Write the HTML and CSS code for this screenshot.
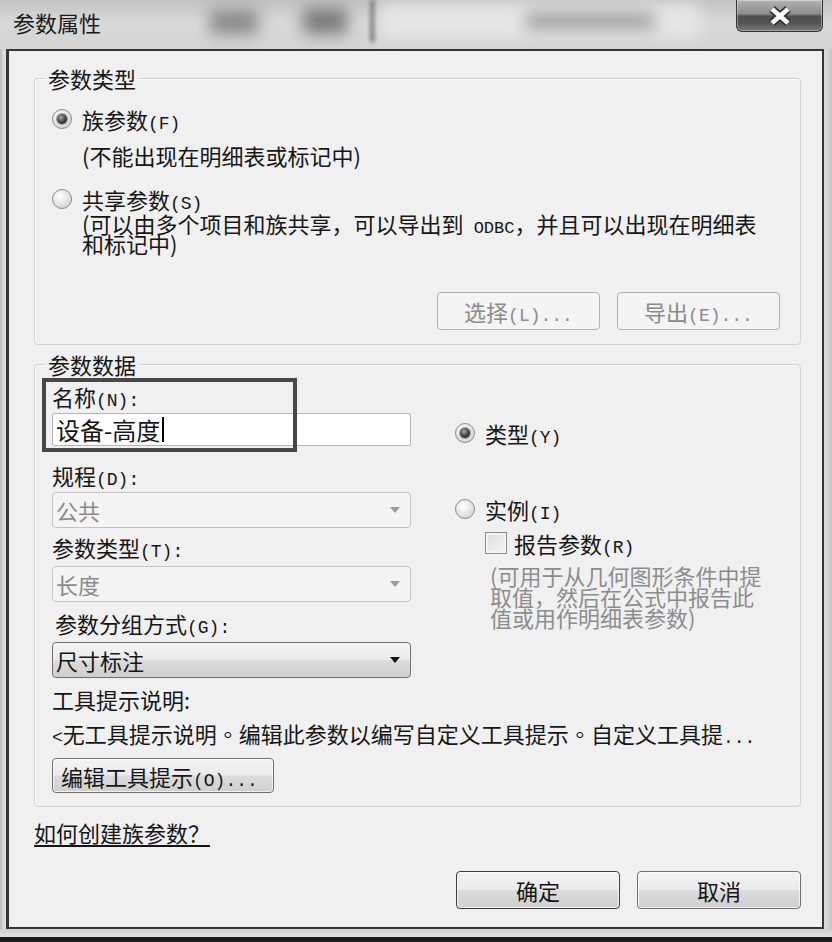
FILE: index.html
```html
<!DOCTYPE html>
<html lang="zh-CN">
<head>
  <meta charset="UTF-8" />
  <meta name="viewport" content="width=device-width, initial-scale=1.0"/>
  <title>参数属性</title>
  <link rel="stylesheet" href="styles.css">
</head>
<body>
  <div class="window">
    <div class="titlebar">
      <span class="glass glass-a"></span>
      <span class="glass glass-b"></span>
      <span class="glass glass-line"></span>
      <span class="glass glass-light"></span>
      <span class="glass glass-c"></span>
      <span class="title">参数属性</span>
      <button class="close-btn" title="关闭">
        <svg width="26" height="22" viewBox="0 0 26 22">
          <path d="M5 4 L21 18 M21 4 L5 18" stroke="#2e2e2e" stroke-width="8" fill="none"/>
          <path d="M5 4 L21 18 M21 4 L5 18" stroke="#ffffff" stroke-width="4.5" fill="none"/>
        </svg>
      </button>
    </div>

    <div class="client">
      <fieldset class="group group-type">
        <legend>参数类型</legend>
        <div class="radio-row first">
          <span class="radio on"></span>
          <span>族参数<span class="key">(F)</span></span>
        </div>
        <p class="note">(不能出现在明细表或标记中)</p>
        <div class="radio-row shared">
          <span class="radio"></span>
          <span>共享参数<span class="key">(S)</span></span>
        </div>
        <p class="note tight">(可以由多个项目和族共享，可以导出到<span class="key"> ODBC</span>，并且可以出现在明细表<br>和标记中)</p>
        <div class="group-actions">
          <button class="btn" disabled>选择<span class="key">(L)...</span></button>
          <button class="btn" disabled>导出<span class="key">(E)...</span></button>
        </div>
      </fieldset>

      <fieldset class="group group-data">
        <legend>参数数据</legend>
        <div class="data-cols">
          <div class="data-left">
            <div class="name-field">
              <label class="field-label">名称<span class="key">(N):</span></label>
              <div class="textbox">设备-高度<span class="caret"></span></div>
              <span class="callout"></span>
            </div>

            <label class="field-label discipline">规程<span class="key">(D):</span></label>
            <div class="combo disabled"><span>公共</span><span class="arrow"></span></div>

            <label class="field-label">参数类型<span class="key">(T):</span></label>
            <div class="combo disabled"><span>长度</span><span class="arrow"></span></div>

            <label class="field-label group-by">参数分组方式<span class="key">(G):</span></label>
            <div class="combo"><span>尺寸标注</span><span class="arrow"></span></div>
          </div>

          <div class="data-right">
            <div class="radio-row type-row">
              <span class="radio on"></span>
              <span>类型<span class="key">(Y)</span></span>
            </div>
            <div class="radio-row instance-row">
              <span class="radio"></span>
              <span>实例<span class="key">(I)</span></span>
            </div>
            <div class="check-row">
              <span class="checkbox"></span>
              <span>报告参数<span class="key">(R)</span></span>
            </div>
            <p class="report-note">(可用于从几何图形条件中提<br>取值，然后在公式中报告此<br>值或用作明细表参数)</p>
          </div>
        </div>

        <div class="tooltip-label">工具提示说明:</div>
        <div class="tooltip-text"><span class="key">&lt;</span>无工具提示说明<span class="cdot" lang="zh-Hant">。</span>编辑此参数以编写自定义工具提示<span class="cdot" lang="zh-Hant">。</span>自定义工具提<span class="key">...</span></div>
        <button class="btn edit-btn">编辑工具提示<span class="key">(O)...</span></button>
      </fieldset>

      <a class="help-link" href="#">如何创建族参数？</a>

      <div class="dialog-actions">
        <button class="btn default">确定</button>
        <button class="btn">取消</button>
      </div>
    </div>
    <div class="frame-bottom"></div>
  </div>
</body>
</html>
```

FILE: styles.css
```css
html, body {
  margin: 0;
  padding: 0;
}

body {
  font-family: "Noto Sans CJK SC", "Noto Sans", sans-serif;
  font-size: 22px;
  color: #151515;
  background: #d6d6d6;
}

.window {
  width: 832px;
  height: 942px;
  display: flex;
  flex-direction: column;
  background: linear-gradient(to right, #bdbdbd, #dcdcdc 4px, #d8d8d8 826px, #c4c4c4);
  overflow: hidden;
}

/* title bar with the blurred glass behind it */
.titlebar {
  position: relative;
  height: 49px;
  flex: none;
  display: flex;
  justify-content: space-between;
  align-items: flex-start;
  padding-left: 13px;
  background: linear-gradient(to bottom, #c2c2c2, #d9d9d9 45%, #d4d4d4);
  overflow: hidden;
}

.glass {
  position: absolute;
  filter: blur(8px);
}

.glass-a {
  left: 210px;
  top: 10px;
  width: 48px;
  height: 24px;
  background: #888;
}

.glass-b {
  left: 303px;
  top: 8px;
  width: 44px;
  height: 26px;
  background: #7a7a7a;
}

.glass-line {
  left: 370px;
  top: 0;
  width: 5px;
  height: 42px;
  background: #7a7a7a;
  filter: blur(2px);
}

.glass-light {
  left: 380px;
  top: 4px;
  width: 320px;
  height: 34px;
  background: #e6e6e6;
}

.glass-c {
  left: 525px;
  top: 12px;
  width: 130px;
  height: 18px;
  background: #a4a4a4;
}

.title {
  position: relative;
  margin-top: 10px;
  line-height: 24px;
  color: #1a1a1a;
}

.close-btn {
  position: relative;
  width: 87px;
  height: 32px;
  margin-right: 9px;
  padding: 0;
  border: 1px solid #333;
  border-top: none;
  border-radius: 0 0 6px 6px;
  background: linear-gradient(to bottom, #b4b4b4, #8c8c8c 45%, #4e4e4e 52%, #555 75%, #7a7a7a);
  box-shadow: inset 0 0 0 1px rgba(255, 255, 255, 0.35);
  display: flex;
  align-items: center;
  justify-content: center;
}

/* dialog client area */
.client {
  box-sizing: border-box;
  height: 880px;
  margin: 0 8px 0 6px;
  border: 2px solid #353535;
  border-left-width: 3px;
  background: #f0f0f0;
}

.frame-bottom {
  flex: none;
  height: 8px;
  background: linear-gradient(to bottom, #d0d0d0, #e2e2e2);
  border-bottom: 5px solid #1c1c1c;
}

.group {
  min-width: 0;
  margin: 0 21px 0 25px;
  padding: 0 20px 14px 17px;
  border: 1px solid #d2d2d2;
  border-radius: 4px;
  box-shadow: inset 1px 1px 0 #fafafa;
}

.group legend {
  margin-left: -7px;
  padding: 0 3px;
  line-height: 24px;
}

.group-type {
  margin-top: 15px;
}

.group-data {
  margin-top: 7px;
  padding-bottom: 13px;
}

p {
  margin: 0;
}

/* access keys and other half-width text, like the dialog's bitmap font */
.key {
  font-family: "Liberation Mono", "DejaVu Sans Mono", monospace;
  font-size: 18px;
  line-height: 0;
}

.radio-row {
  display: flex;
  align-items: center;
  gap: 10px;
  height: 24px;
  line-height: 24px;
}

.radio-row.first {
  margin-top: 17px;
}

.radio-row.shared {
  margin-top: 20px;
}

.radio {
  box-sizing: border-box;
  width: 20px;
  height: 20px;
  flex: none;
  border-radius: 50%;
  border: 1px solid #8a8a8a;
  background: radial-gradient(circle at 40% 35%, #ffffff, #e2e2e2 55%, #c4c4c4);
  display: flex;
  align-items: center;
  justify-content: center;
}

.radio.on::after {
  content: "";
  width: 10px;
  height: 10px;
  border-radius: 50%;
  background: radial-gradient(circle at 40% 35%, #a8a8a8, #3a3a3a 55%, #1e1e1e);
  box-shadow: 0 0 0 1px #9a9a9a;
}

.note {
  margin-top: 12px;
  padding-left: 30px;
  line-height: 24px;
}

.note.tight {
  margin-top: 2px;
  line-height: 20px;
}

.note.tight .key {
  font-size: 17px;
}

.group-actions,
.dialog-actions {
  display: flex;
  justify-content: flex-end;
  gap: 17px;
}

.group-actions {
  margin-top: 39px;
}

.btn {
  box-sizing: border-box;
  width: 163px;
  height: 38px;
  padding: 0;
  font-family: inherit;
  font-size: 22px;
  color: #151515;
  border: 1px solid #6f6f6f;
  border-radius: 4px;
  background: linear-gradient(to bottom, #f4f4f4, #ebebeb 48%, #dcdcdc 52%, #cfcfcf);
  box-shadow: inset 0 0 0 1px rgba(255, 255, 255, 0.7);
}

.btn:disabled {
  color: #8a8a8a;
  border-color: #b2b2b2;
  background: #f4f4f4;
  box-shadow: none;
}

/* parameter data block */
.data-cols {
  display: flex;
  gap: 44px;
}

.data-left {
  width: 359px;
  flex: none;
}

.name-field {
  position: relative;
  margin-top: 8px;
}

.field-label {
  display: block;
  line-height: 24px;
  margin-top: 7px;
}

.name-field .field-label {
  margin-top: 0;
}

.field-label.discipline {
  margin-top: 17px;
}

.field-label.group-by {
  margin-top: 9px;
  padding-left: 3px;
}

.textbox {
  box-sizing: border-box;
  height: 33px;
  margin-top: 5px;
  padding-left: 3px;
  display: flex;
  align-items: center;
  font-size: 24px;
  background: #fff;
  border: 1px solid #b4b4b4;
  border-radius: 2px;
}

.caret {
  display: inline-block;
  width: 2px;
  height: 25px;
  margin-left: 2px;
  background: #000;
}

/* dark frame drawn around the name field */
.callout {
  position: absolute;
  left: -10px;
  top: -6px;
  width: 255px;
  height: 74px;
  box-sizing: border-box;
  border: 4px solid #474747;
}

.combo {
  box-sizing: border-box;
  height: 36px;
  margin-top: 7px;
  padding: 0 10px 0 3px;
  display: flex;
  align-items: center;
  justify-content: space-between;
  border: 1px solid #6f6f6f;
  border-radius: 4px;
  background: linear-gradient(to bottom, #f4f4f4, #ebebeb 48%, #dcdcdc 52%, #cfcfcf);
}

.discipline + .combo {
  margin-top: 5px;
}

.combo .arrow {
  width: 0;
  height: 0;
  border-left: 5px solid transparent;
  border-right: 5px solid transparent;
  border-top: 6px solid #111;
}

.combo.disabled {
  color: #8a8a8a;
  border-color: #c2c2c2;
  background: #f4f4f4;
}

.combo.disabled .arrow {
  border-top-color: #9c9c9c;
}

.type-row {
  margin-top: 45px;
}

.instance-row {
  margin-top: 52px;
}

.check-row {
  display: flex;
  align-items: center;
  gap: 7px;
  height: 24px;
  line-height: 24px;
  margin-top: 10px;
  padding-left: 30px;
}

.checkbox {
  box-sizing: border-box;
  width: 22px;
  height: 22px;
  border: 1px solid #8e8e8e;
  background: linear-gradient(to bottom right, #dcdcdc, #f6f6f6);
  box-shadow: inset 0 0 0 2px #f4f4f4;
}

.report-note {
  margin-top: 10px;
  padding-left: 35px;
  line-height: 21px;
  color: #8c8c8c;
}

.tooltip-label {
  margin-top: 9px;
  line-height: 24px;
}

.tooltip-text {
  margin-top: 10px;
  line-height: 24px;
  white-space: nowrap;
}

.cdot {
  font-family: "Noto Sans CJK TC", sans-serif;
}

.edit-btn {
  display: block;
  width: 222px;
  height: 35px;
  margin-top: 13px;
  text-align: left;
  padding-left: 8px;
}

.help-link {
  display: block;
  width: fit-content;
  margin: 13px 0 0 25px;
  line-height: 24px;
  color: #151515;
  text-decoration: underline;
  text-underline-offset: 3px;
}

.dialog-actions {
  margin: 27px 21px 0 0;
}

.dialog-actions .btn {
  width: 164px;
}

.btn.default {
  border-color: #3c3c3c;
}
```
